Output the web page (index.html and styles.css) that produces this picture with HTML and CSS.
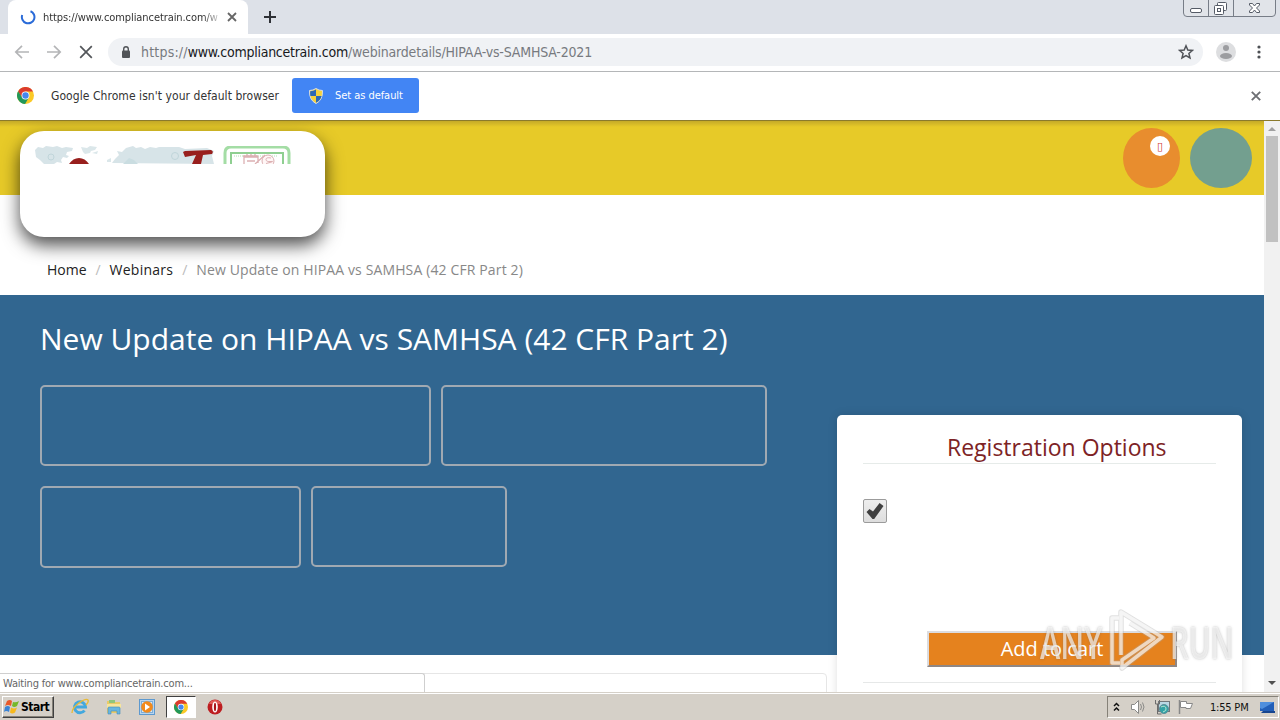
FILE: index.html
```html
<!DOCTYPE html>
<html lang="en">
<head>
    <meta charset="UTF-8">
    <title>New Update on HIPAA vs SAMHSA (42 CFR Part 2)</title>
    <link rel="stylesheet" href="styles.css">
</head>
<body>

<svg class="defs" width="0" height="0">
    <symbol id="chrome-logo" viewBox="0 0 24 24">
        <circle cx="12" cy="12" r="12" fill="#fbc926"/>
        <path d="M12 6.5h10.7A12 12 0 0 0 1.6 6l5.2 9z" fill="#db3b2e"/>
        <path d="M1.6 6A12 12 0 0 0 11.4 24l5.4-9.2L12 12 7 14.6z" fill="#22985a"/>
        <circle cx="12" cy="12" r="5.6" fill="#fff"/>
        <circle cx="12" cy="12" r="4.5" fill="#4587ee"/>
    </symbol>
</svg>

<div class="tabstrip">
    <div class="tab">
        <svg class="spinner" width="16" height="16" viewBox="0 0 16 16"><path d="M10.5 2.2A6.3 6.3 0 1 1 2.2 6" fill="none" stroke="#2a6bd8" stroke-width="2"/></svg>
        <span class="tab-title">https://www.compliancetrain.com/w</span>
        <svg width="10" height="10" viewBox="0 0 10 10"><path d="M1 1l8 8M9 1L1 9" stroke="#666" stroke-width="1.8"/></svg>
    </div>
    <svg class="new-tab" width="12" height="12" viewBox="0 0 12 12"><path d="M6 0v12M0 6h12" stroke="#2e3136" stroke-width="2"/></svg>
    <svg class="window-buttons" width="94" height="18" viewBox="0 0 94 18">
        <path d="M.5 0v13q0 3.500 3.500 3.500h85q3.500 0 3.500-3.500V0" fill="#e1e4e9" stroke="#777d87"/>
        <path d="M25.500 0v16M50.500 0v16" stroke="#777d87"/>
        <rect x="7.500" y="8.500" width="11" height="4" rx="1.500" fill="#fff" stroke="#555b66"/>
        <rect x="34.500" y="2.500" width="9" height="8" rx="1" fill="#fff" stroke="#555b66"/>
        <rect x="31.500" y="5.500" width="9" height="9" rx="1" fill="#fff" stroke="#555b66"/>
        <rect x="34.500" y="8.500" width="3" height="3" fill="#fff" stroke="#555b66"/>
        <path d="M66.500 3.500h3l2 2.500 2-2.500h3v1.500l-3 3 3 3v1.500h-3l-2-2.500-2 2.500h-3V11l3-3-3-3z" fill="#fff" stroke="#555b66"/>
    </svg>
</div>

<div class="toolbar">
    <svg class="nav-icon" width="16" height="16" viewBox="0 0 16 16"><path d="M15 8H2M8 1.800L1.800 8 8 14.200" fill="none" stroke="#b4b5b7" stroke-width="1.700"/></svg>
    <svg class="nav-icon" width="16" height="16" viewBox="0 0 16 16"><path d="M1 8h13M8 1.800L14.200 8 8 14.200" fill="none" stroke="#b4b5b7" stroke-width="1.700"/></svg>
    <svg class="nav-icon" width="16" height="16" viewBox="0 0 16 16"><path d="M2.200 2.200l11.600 11.600M13.800 2.200L2.200 13.800" stroke="#53565a" stroke-width="1.700"/></svg>
    <div class="omnibox">
        <svg class="lock" width="10" height="12" viewBox="0 0 10 12"><path d="M2.700 5V3a2.300 2.300 0 0 1 4.600 0v2" fill="none" stroke="#515458" stroke-width="1.400"/><rect x="1" y="4.500" width="8" height="7.500" rx="1" fill="#515458"/></svg>
        <span class="url"><span class="url-scheme">https://</span><span class="url-host">www.compliancetrain.com</span><span class="url-path">/webinardetails/HIPAA-vs-SAMHSA-2021</span></span>
        <svg class="star" width="16" height="16" viewBox="0 0 16 16"><path d="M8 1.800l1.800 4.200 4.600.4-3.500 3 1.100 4.500L8 11.500l-4 2.400 1.100-4.500-3.500-3 4.600-.4z" fill="none" stroke="#505358" stroke-width="1.500"/></svg>
    </div>
    <svg class="avatar" width="20" height="20" viewBox="0 0 20 20"><circle cx="10" cy="10" r="10" fill="#dddee0"/><circle cx="10" cy="6" r="3" fill="#9c9da0"/><ellipse cx="10" cy="14" rx="6" ry="3" fill="#9c9da0"/></svg>
    <svg class="dots" width="4" height="14" viewBox="0 0 4 14"><circle cx="2" cy="2" r="1.600"/><circle cx="2" cy="7" r="1.600"/><circle cx="2" cy="12" r="1.600"/></svg>
</div>

<div class="infobar">
    <svg class="infobar-logo" width="17" height="17"><use href="#chrome-logo"/></svg>
    <span class="infobar-text">Google Chrome isn't your default browser</span>
    <div class="default-button">
        <svg width="14" height="16" viewBox="0 0 14 16">
            <path d="M7 .5Q10 2.500 13.500 2.500 14 12 7 15.500 0 12 .5 2.500 4 2.500 7 .5z" fill="#f6d23c" stroke="#d8dde2"/>
            <path d="M7 1.500V8H1.400Q1 5.500 1.200 3.200 4.500 3 7 1.500zM7 8h5.600Q11.500 12.500 7 14.700z" fill="#2d68b5"/>
        </svg>
        <span>Set as default</span>
    </div>
    <svg class="infobar-close" width="10" height="10" viewBox="0 0 10 10"><path d="M.8.800l8.400 8.400M9.200.800L.8 9.200" stroke="#6d6f73" stroke-width="1.900"/></svg>
</div>

<div class="viewport">
    <div class="page">
        <div class="site-header">
            <div class="cart-circle"><span class="cart-badge">&#9647;</span></div>
            <div class="user-circle"></div>
        </div>
        <div class="logo-card">
            <svg width="260" height="18" viewBox="0 0 260 18">
                <path d="M0 4l3-3 5 1 3-2 7 1 4-1 5 2 4-1 7 1-1 3-5 1-1 3 3 1-2 2-4-1-2 3 1 3-5-1-3 2H9l-4-4-4-3z" fill="#d7e4e8"/>
                <path d="M46 1l6 1 3-2 7 1-2 3-4 1-1 2-5 1-2-2zM57 7l6-2-1 3zM72 14l4-2v4h-4z" fill="#dbe7ea"/>
                <path d="M77 17l3-4 4-4-2-4 5 1 4-4 7-2 3 2 5-1 4 2 5-2 6 1 3-1h20l6 2 22-1 7 3-2 5 2 8z" fill="#d7e4e8"/>
                <circle cx="16" cy="11" r="3" fill="none" stroke="#c0d5da"/>
                <circle cx="140" cy="10" r="3.500" fill="none" stroke="#c0d5da"/>
                <path d="M88 18l6-6 5 2 4 4z" fill="#cadde1"/>
                <path d="M34 18Q38 12 44 12t10 6z" fill="#981f1d"/>
                <path d="M148 6l2-1 26-1q3 1 1 4l-9 1-2 9h-9l4-9-11 2z" fill="#981f1d"/>
                <path d="M190 18V7q0-6 6-6h52q6 0 6 6v11" fill="none" stroke="#a4dda5" stroke-width="3"/>
                <path d="M196 18V7h52v11" fill="none" stroke="#8fcf91" stroke-width="2"/>
                <path d="M199 10h44" stroke="#b4dfb4" stroke-dasharray="1 1"/>
                <path d="M208 10h15M209 18v-7h14v6M212 8v3M216 8v3M220 8v3M212 15h8M220 18l10-9" fill="none" stroke="#dcb0b2" stroke-width="1.300"/>
                <circle cx="233" cy="15" r="6" fill="#fff6f6" stroke="#dcb0b2"/>
                <path d="M236 12q-5-1-5 1.500t5 2-5 2" fill="none" stroke="#dcb0b2"/>
            </svg>
        </div>
        <div class="breadcrumb">
            <span class="crumb">Home</span><span class="slash">/</span><span class="crumb crumb-webinars">Webinars</span><span class="slash">/</span><span class="crumb-current">New Update on HIPAA vs SAMHSA (42 CFR Part 2)</span>
        </div>
        <div class="banner">
            <h1>New Update on HIPAA vs SAMHSA (42 CFR Part 2)</h1>
            <div class="boxes">
                <div class="box box-a"></div>
                <div class="box box-b"></div>
            </div>
            <div class="boxes">
                <div class="box box-c"></div>
                <div class="box box-d"></div>
            </div>
        </div>
        <div class="content"></div>
        <div class="registration">
            <h2><span>Registration Options</span></h2>
            <div class="checkbox">
                <svg width="18" height="18" viewBox="0 0 18 18"><path d="M.5 10l3-3L7 9.500 13.600 1 17.500 4 8.200 17H6.500z" fill="#404040"/></svg>
            </div>
            <div class="cart-button"><span>Add to cart</span></div>
            <div class="divider"></div>
        </div>
    </div>
    <div class="scrollbar">
        <svg width="8" height="4" viewBox="0 0 8 4"><path d="M0 4l4-4 4 4z" fill="#a0a0a0"/></svg>
        <div class="thumb"></div>
        <svg class="arrow-down" width="8" height="4" viewBox="0 0 8 4"><path d="M0 0l4 4 4-4z" fill="#505050"/></svg>
    </div>
    <div class="status"><span>Waiting for www.compliancetrain.com...</span></div>
    <div class="watermark">
        <span class="mark-any">ANY</span>
        <svg width="62" height="66" viewBox="0 0 62 66">
            <path d="M16 55H8V10H15M17 47V4L58 29 18 60V52L50 30 26 15" fill="none" stroke="#aaa" stroke-opacity=".35" stroke-width="5.500" stroke-linejoin="round"/>
            <path d="M16 55H8V10H15M17 47V4L58 29 18 60V52L50 30 26 15" fill="none" stroke="#fff" stroke-opacity=".65" stroke-width="3.500" stroke-linejoin="round"/>
        </svg>
        <span class="mark-run">RUN</span>
    </div>
</div>

<div class="taskbar">
    <div class="start">
        <svg width="16" height="16" viewBox="0 0 16 16">
            <path d="M3 2q3-2 5 0L7 7Q4 5 1 7z" fill="#e8592b"/>
            <path d="M9 3q3 1 6-1l-2 5q-3 2-5 0z" fill="#76b82a"/>
            <path d="M1 8q3-2 5 0l-1 5q-3-2-5 0z" fill="#3a83d5"/>
            <path d="M7 8.500q3 2 6 0l-2 5q-3 2-5 0z" fill="#f7b91c"/>
        </svg>
        <span>Start</span>
    </div>
    <div class="quick">
        <svg width="18" height="18" viewBox="0 0 18 18"><path d="M13.500 12.500A5.500 5.500 0 1 1 14.500 9H5" fill="none" stroke="#43a8de" stroke-width="3"/><path d="M1 15Q1 10 8 5t9-3q1 2-2 5" fill="none" stroke="#e9ba36" stroke-width="1.400"/></svg>
    </div>
    <div class="quick">
        <svg width="16" height="16" viewBox="0 0 16 16"><path d="M1 2h5l1 1h7v11H1z" fill="#e9ca67"/><path d="M3 1h6v3H3z" fill="#8fc67c"/><path d="M1 5h14v4H1z" fill="#f7e59c"/><path d="M2 15V9q0-1 1-1h10q1 0 1 1v6h-3v-3H5v3z" fill="#68b6df" stroke="#448cb9" stroke-width=".6"/></svg>
    </div>
    <div class="quick">
        <svg width="16" height="16" viewBox="0 0 16 16"><rect x=".5" y=".5" width="15" height="15" fill="#b8d5ef" stroke="#5d99cf"/><rect x="2.500" y="2.500" width="11" height="11" fill="#d9e9f7" stroke="#7eaed7"/><circle cx="8" cy="8" r="5.800" fill="#f28a1c"/><path d="M6 4.500l5 3.500-5 3.500z" fill="#fff"/></svg>
    </div>
    <div class="quick active"><svg width="14" height="14"><use href="#chrome-logo"/></svg></div>
    <div class="quick">
        <svg width="16" height="16" viewBox="0 0 16 16"><circle cx="8" cy="8" r="7.500" fill="#bd1d20"/><path d="M2 5a6.500 6.500 0 0 1 12 0z" fill="#e05b57"/><ellipse cx="8" cy="8" rx="2.800" ry="5.500" fill="#fff"/><ellipse cx="8" cy="8" rx="1.100" ry="4.300" fill="#a81418"/></svg>
    </div>
    <div class="tray">
        <svg width="7" height="10" viewBox="0 0 7 10"><path d="M1 4l2.500-2.500L6 4M1 8.500L3.500 6 6 8.500" fill="none" stroke="#111" stroke-width="1.500"/></svg>
        <svg class="speaker" width="16" height="16" viewBox="0 0 16 16"><path d="M1.500 5.500h3l4-4v13l-4-4h-3z" fill="#fff" stroke="#8a8a88"/><path d="M10.500 5q2 3 0 6M12.500 3.500q3 4.500 0 9" fill="none" stroke="#8a8a88"/></svg>
        <svg class="network" width="16" height="16" viewBox="0 0 16 16"><rect x="4.500" y="2.500" width="11" height="10" fill="#bad8e4" stroke="#71777b"/><path d="M1.500 1v4h4V1M3.500 5v10h4" fill="none" stroke="#6c6c6c"/><circle cx="10" cy="10" r="4.500" fill="#32a3a6" stroke="#5e8d97"/><path d="M7 8q4-2 5 1t-3 4" fill="none" stroke="#b9e5d2"/></svg>
        <svg class="flag" width="16" height="16" viewBox="0 0 16 16"><path d="M1.500 1v14" stroke="#888" stroke-width="1.500"/><path d="M2.500 2.500h6v2h6l-2 5H8v-1H2.500z" fill="#fff" stroke="#888"/></svg>
        <span class="clock">1:55 PM</span>
        <svg width="15" height="13" viewBox="0 0 15 13"><path d="M0 1h14v9H0z" fill="#225fb8"/><path d="M0 1h14L2 8 0 7z" fill="#4f8fdd"/><path d="M3 10h12v2H1z" fill="#16458f"/></svg>
    </div>
</div>

</body>
</html>
```

FILE: styles.css
```css
* {
    box-sizing: border-box;
}
body {
    margin: 0;
    width: 1280px;
    height: 720px;
    overflow: hidden;
    display: flex;
    flex-direction: column;
    background: #fff;
    font-family: "DejaVu Sans Condensed", "DejaVu Sans", sans-serif;
}
svg {
    display: block;
    flex-shrink: 0;
}
span {
    white-space: nowrap;
}
.defs {
    position: absolute;
}

/* browser window */
.tabstrip {
    height: 34px;
    background: #dde1e8;
    display: flex;
    align-items: center;
    padding-left: 8px;
    flex-shrink: 0;
}
.tab {
    width: 240px;
    height: 34px;
    background: #fff;
    border-radius: 8px 8px 0 0;
    display: flex;
    align-items: center;
    padding: 0 11px 0 12px;
}
.tab-title {
    width: 176px;
    margin-left: 7px;
    margin-right: 8px;
    overflow: hidden;
    font-size: 11px;
    letter-spacing: -0.08px;
    color: #333;
    mask-image: linear-gradient(to right, #000 160px, transparent 180px);
}
.new-tab {
    margin-left: 16px;
}
.window-buttons {
    margin-left: auto;
    margin-right: 3px;
    align-self: flex-start;
}
.toolbar {
    height: 38px;
    border-bottom: 1px solid #b4b6b8;
    display: flex;
    align-items: center;
    padding: 0 0 1px 14px;
    flex-shrink: 0;
}
.nav-icon {
    margin-right: 16px;
}
.omnibox {
    width: 1095px;
    height: 28px;
    margin-left: -2px;
    border-radius: 14px;
    background: #f0f2f5;
    display: flex;
    align-items: center;
    padding: 0 9px 0 13px;
}
.url {
    margin-left: 10px;
    font-size: 14px;
    color: #777a7f;
}
.url-scheme {
    letter-spacing: 0.2px;
}
.url-host {
    color: #17191c;
    letter-spacing: -0.26px;
}
.url-path {
    letter-spacing: -0.19px;
}
.star {
    margin-left: auto;
}
.avatar {
    margin-left: 13px;
}
.dots {
    margin-left: 21px;
    fill: #4d5054;
}
.infobar {
    height: 49px;
    border-bottom: 1px solid #8b7a2c;
    display: flex;
    align-items: center;
    padding: 0 19px 1px 17px;
    flex-shrink: 0;
}
.infobar-text {
    width: 229px;
    margin-left: 17px;
    font-size: 12px;
    letter-spacing: 0.06px;
    color: #333;
}
.default-button {
    width: 127px;
    height: 35px;
    margin-left: 12px;
    border-radius: 3px;
    background: #4285f4;
    color: #fff;
    font-size: 11px;
    letter-spacing: -0.05px;
    display: flex;
    align-items: center;
    gap: 12px;
    padding-left: 17px;
}
.infobar-close {
    margin-left: auto;
}

/* web page */
.viewport {
    position: relative;
    height: 571px;
    display: flex;
    overflow: hidden;
    flex-shrink: 0;
}
.page {
    position: relative;
    width: 1264px;
    font-family: "Open Sans", sans-serif;
}
.site-header {
    height: 74px;
    background: linear-gradient(#c5aa28, #e7ca28 6px);
    display: flex;
    justify-content: flex-end;
    gap: 10px;
    padding: 7px 12px 0 0;
}
.cart-circle {
    width: 57px;
    height: 60px;
    border-radius: 50%;
    background: #e88d2e;
    padding: 8px 0 0 27px;
}
.cart-badge {
    width: 20px;
    height: 20px;
    border-radius: 50%;
    background: #fff;
    color: #cf3a33;
    font: 11px "DejaVu Sans", sans-serif;
    display: flex;
    align-items: center;
    justify-content: center;
}
.user-circle {
    width: 62px;
    height: 60px;
    border-radius: 50%;
    background: #739f8f;
}
.logo-card {
    position: absolute;
    left: 20px;
    top: 10px;
    width: 305px;
    height: 106px;
    border-radius: 24px;
    background: #fff;
    box-shadow: 0 8px 18px rgba(0, 0, 0, 0.7);
    padding: 15px 15px;
}
.breadcrumb {
    height: 100px;
    padding: 64px 0 0 47px;
    font-size: 14px;
    line-height: 22px;
    display: flex;
}
.crumb {
    color: #222;
}
.crumb-webinars {
    letter-spacing: 0.25px;
}
.slash {
    width: 23px;
    text-align: center;
    color: #bbb;
}
.crumb-current {
    color: #888;
    letter-spacing: 0.13px;
}
.banner {
    height: 360px;
    background: #316690;
    padding: 21px 0 0 40px;
}
h1 {
    margin: 0 0 24px;
    font-size: 30px;
    line-height: 45px;
    font-weight: 400;
    color: #fff;
}
.boxes {
    display: flex;
    gap: 10px;
    margin-bottom: 20px;
}
.box {
    height: 81px;
    border: 2px solid #a0a9b2;
    border-radius: 5px;
}
.box-a {
    width: 391px;
}
.box-b {
    width: 326px;
}
.box-c {
    width: 261px;
    height: 82px;
}
.box-d {
    width: 196px;
}
.content {
    width: 803px;
    height: 60px;
    margin: 18px 0 0 24px;
    border: 1px solid #e6e6e6;
    border-radius: 4px;
}
.registration {
    position: absolute;
    left: 837px;
    top: 294px;
    width: 405px;
    height: 320px;
    border-radius: 5px;
    background: #fff;
    box-shadow: 0 0 10px rgba(0, 0, 0, 0.13);
    padding: 16px 26px;
}
h2 {
    margin: 0;
    height: 33px;
    border-bottom: 1px solid #e6ebe9;
    padding-left: 84px;
    font-size: 23px;
    line-height: 32px;
    font-weight: 400;
    color: #7d2325;
}
.checkbox {
    width: 24px;
    height: 24px;
    margin-top: 35px;
    border: 1px solid #9b9b9b;
    border-radius: 2px;
    background: linear-gradient(#eee, #ddd);
    display: flex;
    align-items: center;
    justify-content: center;
}
.cart-button {
    width: 250px;
    height: 36px;
    margin: 108px 0 0 64px;
    border: 2px solid;
    border-color: #dcdcdf #8f8784 #8f8784 #dcdcdf;
    background: #e5821e;
    color: #fff;
    font-size: 20px;
    line-height: 32px;
    text-align: center;
}
.divider {
    margin-top: 15px;
    height: 1px;
    background: #e6e8e8;
}
.scrollbar {
    width: 16px;
    background: #f1f1f1;
    display: flex;
    flex-direction: column;
    align-items: center;
    padding: 6px 0 7px;
}
.thumb {
    width: 12px;
    height: 106px;
    margin-top: 5px;
    background: #c1c1c1;
}
.arrow-down {
    margin-top: auto;
}
.status {
    position: absolute;
    left: 0;
    bottom: 0;
    width: 425px;
    height: 19px;
    border: 1px solid #cfcfcf;
    border-width: 1px 1px 0 0;
    border-radius: 0 3px 0 0;
    background: #fff;
    padding-left: 3px;
    font-size: 11px;
    line-height: 19px;
    letter-spacing: -0.19px;
    color: #666;
}
.watermark {
    position: absolute;
    left: 1040px;
    top: 487px;
    width: 194px;
    height: 66px;
    display: flex;
    align-items: center;
    font: 600 45px "Open Sans", sans-serif;
    color: rgba(255, 255, 255, 0.65);
    text-shadow: 0 0 3px rgba(100, 100, 100, 0.45);
}
.mark-any {
    width: 64px;
    transform: scaleX(0.68);
    transform-origin: left;
}
.mark-run {
    width: 62px;
    transform: scaleX(0.65);
    transform-origin: left;
    margin-left: 4px;
}

/* taskbar */
.taskbar {
    height: 28px;
    background: #d5d0c8;
    border-top: 1px solid #d5d0c8;
    box-shadow: inset 0 1px #fff;
    display: flex;
    padding: 3px 1px 1px 2px;
    flex-shrink: 0;
}
.start {
    width: 52px;
    height: 22px;
    border: 1px solid;
    border-color: #fff #404040 #404040 #fff;
    box-shadow: inset -1px -1px #858178;
    display: flex;
    align-items: center;
    gap: 1px;
    padding-left: 1px;
    margin-right: 11px;
    font-size: 12px;
    font-weight: bold;
    letter-spacing: -0.5px;
}
.quick {
    width: 30px;
    height: 22px;
    margin-right: 3.700px;
    display: flex;
    align-items: center;
    justify-content: center;
}
.active {
    border: 1px solid;
    border-color: #404040 #fff #fff #404040;
    background: #fff;
}
.tray {
    width: 172px;
    height: 22px;
    margin-left: auto;
    border: 1px solid;
    border-color: #858178 #fff #fff #858178;
    display: flex;
    align-items: center;
    padding-left: 5px;
}
.speaker {
    margin-left: 10px;
}
.network,
.flag {
    margin-left: 8px;
}
.clock {
    width: 40px;
    margin: 0 10px 0 16px;
    font-size: 11px;
    letter-spacing: -0.2px;
    color: #111;
}
```
